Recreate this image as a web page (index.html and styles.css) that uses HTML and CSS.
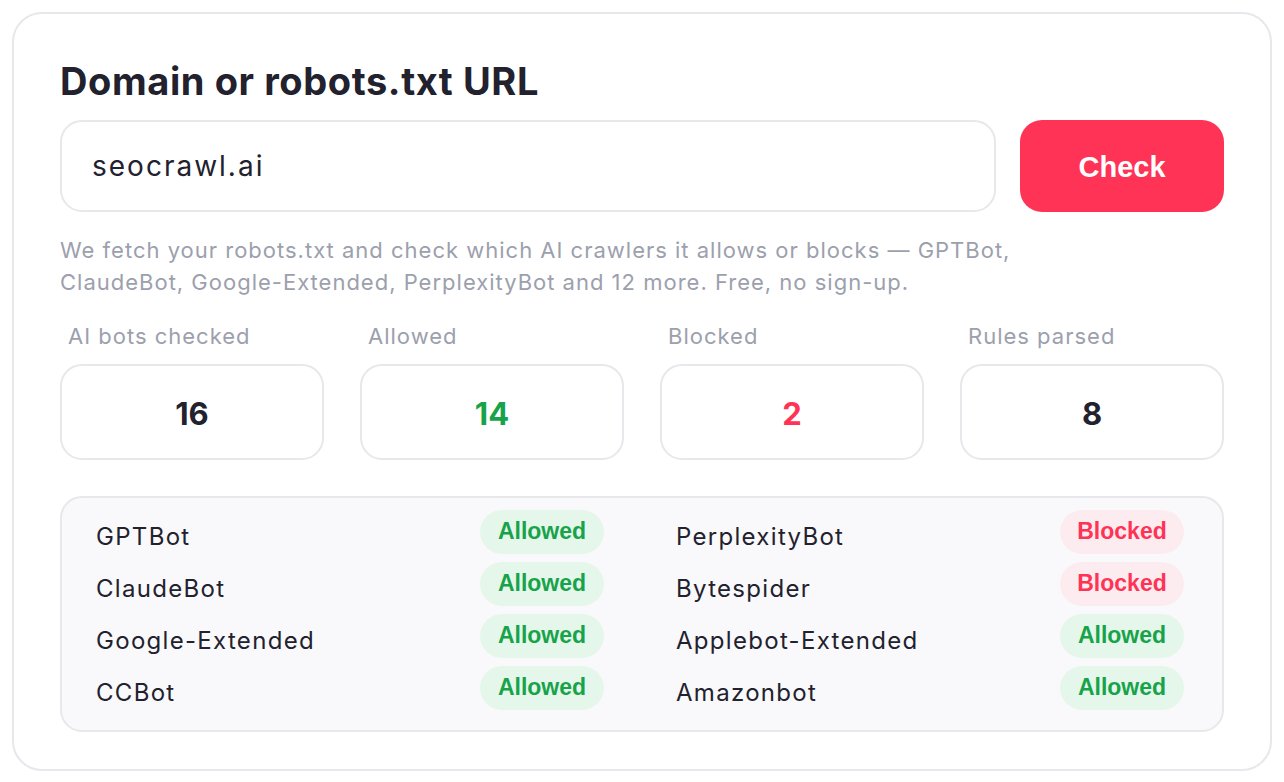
FILE: index.html
```html
<!DOCTYPE html>
<html>
<head>
<meta charset="utf-8">
<link rel="stylesheet" href="styles.css">
</head>
<body>
<div class="card">
  <h1 class="title">Domain or robots.txt URL</h1>
  <div class="input-row">
    <div class="input">seocrawl.ai</div>
    <button class="btn">Check</button>
  </div>
  <p class="desc">We fetch your robots.txt and check which AI crawlers it allows or blocks — GPTBot,<br>ClaudeBot, Google-Extended, PerplexityBot and 12 more. Free, no sign-up.</p>
  <div class="stats">
    <div class="stat">
      <div class="stat-label">AI bots checked</div>
      <div class="stat-box">16</div>
    </div>
    <div class="stat">
      <div class="stat-label">Allowed</div>
      <div class="stat-box green">14</div>
    </div>
    <div class="stat">
      <div class="stat-label">Blocked</div>
      <div class="stat-box red">2</div>
    </div>
    <div class="stat">
      <div class="stat-label">Rules parsed</div>
      <div class="stat-box">8</div>
    </div>
  </div>
  <div class="bots">
    <div class="bot"><span class="name">GPTBot</span><span class="badge ok">Allowed</span></div>
    <div class="bot"><span class="name">PerplexityBot</span><span class="badge no">Blocked</span></div>
    <div class="bot"><span class="name">ClaudeBot</span><span class="badge ok">Allowed</span></div>
    <div class="bot"><span class="name">Bytespider</span><span class="badge no">Blocked</span></div>
    <div class="bot"><span class="name">Google-Extended</span><span class="badge ok">Allowed</span></div>
    <div class="bot"><span class="name">Applebot-Extended</span><span class="badge ok">Allowed</span></div>
    <div class="bot"><span class="name">CCBot</span><span class="badge ok">Allowed</span></div>
    <div class="bot"><span class="name">Amazonbot</span><span class="badge ok">Allowed</span></div>
  </div>
</div>
</body>
</html>
```

FILE: styles.css
```css
* { box-sizing: border-box; }
html, body { margin: 0; padding: 0; background: #ffffff; }
body {
  font-family: "Inter", "Liberation Sans", sans-serif;
  color: #22212e;
  padding: 12px;
}
.card {
  border: 2px solid #e7e7ec;
  border-radius: 30px;
  padding: 46px 46px 37px 46px;
  background: #fff;
}
.title {
  margin: 0 0 18px 0;
  font-size: 38px;
  line-height: 42px;
  font-weight: 700;
  letter-spacing: 0.6px;
  color: #22212e;
}
.input-row {
  display: flex;
  gap: 24px;
  height: 92px;
}
.input {
  flex: 1;
  border: 2px solid #e7e7ec;
  border-radius: 22px;
  display: flex;
  align-items: center;
  padding-left: 30px;
  font-size: 28px;
  letter-spacing: 2px;
  color: #22212e;
}
.btn {
  width: 204px;
  border: none;
  border-radius: 22px;
  background: #ff3355;
  color: #fff;
  font-family: "Liberation Sans", Arial, sans-serif;
  font-weight: 700;
  font-size: 29px;
  padding-top: 4px;
}
.desc {
  margin: 22px 0 24px 0;
  font-size: 22px;
  line-height: 32px;
  letter-spacing: 1px;
  color: #9ca0ad;
}
.stats {
  display: grid;
  grid-template-columns: repeat(4, 1fr);
  gap: 36px;
}
.stat-label {
  font-size: 22px;
  line-height: 28px;
  letter-spacing: 1px;
  color: #9ca0ad;
  padding-left: 8px;
  margin-bottom: 14px;
}
.stat-box {
  height: 96px;
  border: 2px solid #e7e7ec;
  border-radius: 22px;
  display: flex;
  align-items: center;
  justify-content: center;
  font-size: 31px;
  font-weight: 700;
  padding-top: 2px;
  color: #22212e;
}
.stat-box.green { color: #17a34a; }
.stat-box.red { color: #ff3355; }
.bots {
  margin-top: 36px;
  background: #f9f9fb;
  border: 2px solid #e7e7ec;
  border-radius: 22px;
  padding: 12px 38px 20px 34px;
  display: grid;
  grid-template-columns: 1fr 1fr;
  column-gap: 72px;
  row-gap: 8px;
}
.bot {
  display: flex;
  align-items: center;
  justify-content: space-between;
  height: 44px;
}
.name {
  font-size: 24px;
  letter-spacing: 1.3px;
  padding-top: 8px;
  color: #22212e;
}
.badge {
  width: 124px;
  height: 44px;
  border-radius: 22px;
  display: flex;
  align-items: center;
  justify-content: center;
  font-family: "Liberation Sans", Arial, sans-serif;
  font-weight: 700;
  font-size: 23px;
  padding-bottom: 1px;
}
.badge.ok { background: #e5f7ea; color: #17a34a; }
.badge.no { background: #fdecef; color: #ff3355; }
```
